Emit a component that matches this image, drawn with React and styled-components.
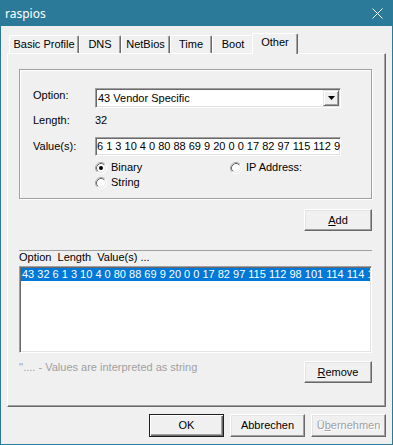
import styled, { createGlobalStyle } from 'styled-components';

const GlobalStyle = createGlobalStyle`
  html, body {
    margin: 0;
    padding: 0;
    background: #f0f0f0;
  }
  body {
    font-family: "Liberation Sans", Arial, sans-serif;
    font-size: 11px;
    line-height: 13px;
    color: #000;
  }
  * {
    box-sizing: border-box;
  }
`;

const Window = styled.div`
  width: 393px;
  height: 445px;
  border: 1px solid #2b7a99;
  background: #f0f0f0;
  display: flex;
  flex-direction: column;
`;

const TitleBar = styled.div`
  height: 25px;
  flex: none;
  display: flex;
  align-items: center;
  justify-content: space-between;
  padding: 0 9px 0 4px;
  background: #2b7a99;
  color: #fff;
  font-family: "Noto Sans", "Open Sans", sans-serif;
  font-size: 12px;
`;

const Client = styled.div`
  flex: 1;
  display: flex;
  flex-direction: column;
  padding: 7px 6px;
`;

const TabStrip = styled.div`
  height: 20px;
  display: flex;
  align-items: flex-end;
  padding-left: 2px;
`;

const Tab = styled.div`
  width: ${p => p.$w}px;
  height: ${p => (p.$active ? 21 : 18)}px;
  margin: ${p => (p.$active ? '0 -2px -1px -2px' : '0')};
  padding-bottom: ${p => (p.$active ? 3 : 0)}px;
  position: relative;
  z-index: ${p => (p.$active ? 2 : 1)};
  display: flex;
  align-items: center;
  justify-content: center;
  background: #f0f0f0;
  border: 1px solid;
  border-bottom: none;
  border-color: #fff #696969 transparent #fff;
  border-radius: 2px 2px 0 0;
  box-shadow: inset -1px 0 #a0a0a0;
  white-space: nowrap;
`;

const Panel = styled.div`
  height: 354px;
  display: flex;
  flex-direction: column;
  padding: 15px 13px 0 11px;
  border: 1px solid;
  border-color: #fff #696969 #696969 #fff;
  box-shadow: inset -1px -1px #a0a0a0;
`;

const GroupBox = styled.div`
  height: 130px;
  padding: 18px 0 0 13px;
  border: 1px solid #a0a0a0;
  box-shadow: 1px 1px 0 #fff, inset 1px 1px 0 #fff;
`;

const FieldRow = styled.div`
  display: flex;
  align-items: center;
  margin-top: ${p => p.$gap || 0}px;
  height: ${p => p.$h}px;
`;

const Label = styled.div`
  width: 62px;
  flex: none;
  align-self: ${p => (p.$top ? 'flex-start' : 'center')};
  margin-top: ${p => (p.$top ? 1 : 0)}px;
`;

const Sunken = styled.div`
  width: 246px;
  height: 100%;
  display: flex;
  align-items: center;
  padding: 1px;
  background: #fff;
  border: 1px solid;
  border-color: #a0a0a0 #fff #fff #a0a0a0;
  box-shadow: inset 1px 1px #696969, inset -1px -1px #e3e3e3;
  overflow: hidden;
  white-space: nowrap;
`;

const ComboText = styled.div`
  flex: 1;
  padding-left: 1px;
`;

const DropButton = styled.div`
  width: 16px;
  height: 100%;
  flex: none;
  display: flex;
  align-items: center;
  justify-content: center;
  background: #f0f0f0;
  border: 1px solid;
  border-color: #e3e3e3 #696969 #696969 #e3e3e3;
  box-shadow: inset 1px 1px #fff, inset -1px -1px #a0a0a0;
`;

const RadioGrid = styled.div`
  margin: 4px 0 0 62px;
  display: grid;
  grid-template-columns: 135px auto;
  grid-auto-rows: 15px;
`;

const RadioItem = styled.label`
  display: flex;
  align-items: center;
  gap: 4px;
`;

const ButtonRow = styled.div`
  display: flex;
  justify-content: ${p => p.$split ? 'space-between' : 'flex-end'};
  align-items: flex-start;
  gap: 6px;
  margin-top: ${p => p.$gap}px;
`;

const Button = styled.button`
  width: ${p => p.$w}px;
  height: ${p => p.$h}px;
  padding: 0;
  font: inherit;
  color: ${p => (p.disabled ? '#a0a0a0' : '#000')};
  text-shadow: ${p => (p.disabled ? '1px 1px 0 #fff' : 'none')};
  background: #f0f0f0;
  border: 1px solid;
  border-color: ${p => (p.$default ? '#1e1e1e' : '#fff #696969 #696969 #fff')};
  box-shadow: ${p =>
    p.$default
      ? 'inset 1px 1px #fff, inset -1px -1px #696969, inset -2px -2px #a0a0a0'
      : 'inset -1px -1px #a0a0a0, inset 1px 1px #e3e3e3'};
`;

const ListFrame = styled.div`
  height: 103px;
  margin-top: 19px;
  display: flex;
  flex-direction: column;
`;

const ListHeader = styled.div`
  height: 16px;
  border-top: 1px solid #a0a0a0;
  white-space: pre;
`;

const ListBox = styled.div`
  flex: 1;
  padding: 1px;
  background: #fff;
  border: 1px solid;
  border-color: #a0a0a0 #fff #fff #a0a0a0;
  box-shadow: inset 1px 1px #696969, inset -1px -1px #e3e3e3;
  overflow: hidden;
`;

const ListItem = styled.div`
  height: 13px;
  padding-left: 1px;
  background: ${p => (p.$selected ? '#0078d7' : 'transparent')};
  color: ${p => (p.$selected ? '#fff' : '#000')};
  white-space: nowrap;
  overflow: hidden;
`;

const Hint = styled.div`
  color: #a0a0a0;
`;

const Radio = ({ checked }) => (
  <svg width="12" height="12" viewBox="0 0 12 12">
    <circle cx="6" cy="6" r="5.5" fill="#fff" stroke="#fff" />
    <path d="M2.11 9.89A5.5 5.5 0 0 1 9.89 2.11" fill="none" stroke="#a0a0a0" />
    <circle cx="6" cy="6" r="4.5" fill="#fff" stroke="#e3e3e3" />
    <path d="M2.82 9.18A4.5 4.5 0 0 1 9.18 2.82" fill="none" stroke="#696969" />
    {checked && <circle cx="6" cy="6" r="2" fill="#000" />}
  </svg>
);

const tabs = [
  ['Basic Profile', 70],
  ['DNS', 42],
  ['NetBios', 49],
  ['Time', 42],
  ['Boot', 42],
  ['Other', 46],
];

const values = '6 1 3 10 4 0 80 88 69 9 20 0 0 17 82 97 115 112 98 101 114 114 121 32 80 105';

export default function App() {
  return (
    <>
      <GlobalStyle />
      <Window>
        <TitleBar>
          <span>raspios</span>
          <svg width="11" height="11" viewBox="0 0 11 11">
            <path d="M0.5 0.5L10.5 10.5M10.5 0.5L0.5 10.5" stroke="#fff" strokeWidth="1" />
          </svg>
        </TitleBar>
        <Client>
          <TabStrip>
            {tabs.map(([name, w]) => (
              <Tab key={name} $w={w} $active={name === 'Other'}>
                {name}
              </Tab>
            ))}
          </TabStrip>
          <Panel>
            <GroupBox>
              <FieldRow $h={20}>
                <Label $top>Option:</Label>
                <Sunken>
                  <ComboText>43 Vendor Specific</ComboText>
                  <DropButton>
                    <svg width="7" height="4" viewBox="0 0 7 4">
                      <path d="M0 0H7L3.5 4Z" fill="#000" />
                    </svg>
                  </DropButton>
                </Sunken>
              </FieldRow>
              <FieldRow $h={13} $gap={6}>
                <Label>Length:</Label>
                <span>32</span>
              </FieldRow>
              <FieldRow $h={19} $gap={10}>
                <Label>Value(s):</Label>
                <Sunken>{values}</Sunken>
              </FieldRow>
              <RadioGrid>
                <RadioItem>
                  <Radio checked />
                  Binary
                </RadioItem>
                <RadioItem>
                  <Radio />
                  IP Address:
                </RadioItem>
                <RadioItem>
                  <Radio />
                  String
                </RadioItem>
              </RadioGrid>
            </GroupBox>
            <ButtonRow $gap={10}>
              <Button $w={68} $h={22}>
                <u>A</u>dd
              </Button>
            </ButtonRow>
            <ListFrame>
              <ListHeader>{'Option  Length  Value(s) ...'}</ListHeader>
              <ListBox>
                <ListItem $selected>43 32 {values}</ListItem>
              </ListBox>
            </ListFrame>
            <ButtonRow $gap={8} $split>
              <Hint>''.... - Values are interpreted as string</Hint>
              <Button $w={68} $h={22}>
                <u>R</u>emove
              </Button>
            </ButtonRow>
          </Panel>
          <ButtonRow $gap={7}>
            <Button $w={75} $h={23} $default>
              OK
            </Button>
            <Button $w={75} $h={23}>
              Abbrechen
            </Button>
            <Button $w={75} $h={23} disabled>
              Ü<u>b</u>ernehmen
            </Button>
          </ButtonRow>
        </Client>
      </Window>
    </>
  );
}
